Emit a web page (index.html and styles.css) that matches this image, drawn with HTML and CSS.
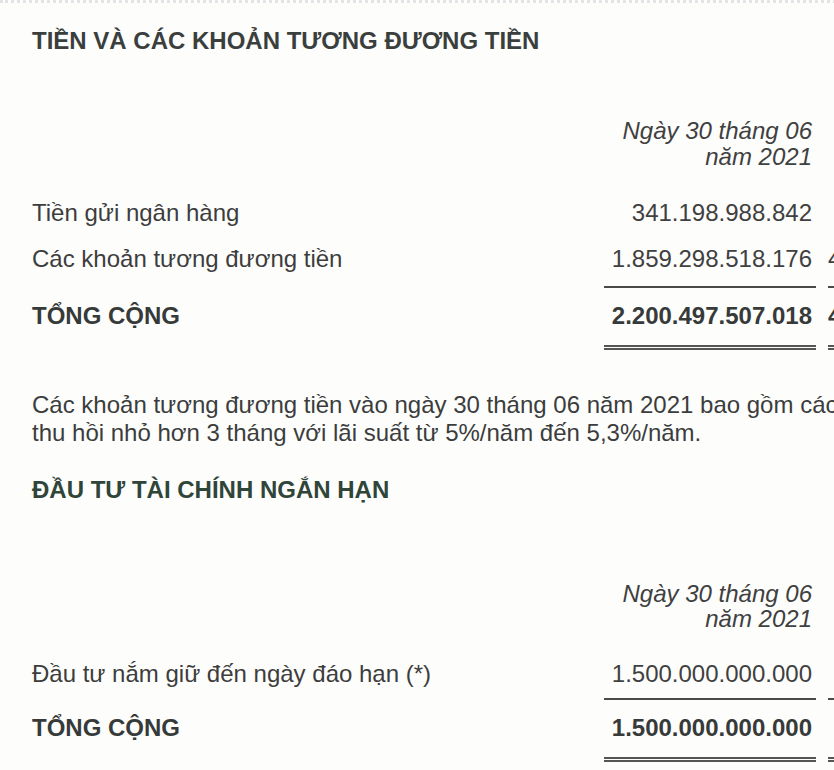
FILE: index.html
```html
<!DOCTYPE html>
<html lang="vi">
<head>
<meta charset="utf-8">
<title>Tiền và các khoản tương đương tiền</title>
<link rel="stylesheet" href="styles.css">
</head>
<body>
<main class="page">
  <section class="note note-cash">
    <h2 class="note-title">TIỀN VÀ CÁC KHOẢN TƯƠNG ĐƯƠNG TIỀN</h2>
    <div class="fin-table">
      <div class="row row-head">
        <span class="label"></span>
        <span class="amount date">Ngày 30 tháng 06<br>năm 2021</span>
        <span class="prev"></span>
      </div>
      <div class="row">
        <span class="label">Tiền gửi ngân hàng</span>
        <span class="amount">341.198.988.842</span>
        <span class="prev"></span>
      </div>
      <div class="row">
        <span class="label">Các khoản tương đương tiền</span>
        <span class="amount">1.859.298.518.176</span>
        <span class="prev">4</span>
      </div>
      <div class="row row-total">
        <span class="label">TỔNG CỘNG</span>
        <span class="amount">2.200.497.507.018</span>
        <span class="prev">4</span>
      </div>
    </div>
    <p class="note-text">Các khoản tương đương tiền vào ngày 30 tháng 06 năm 2021 bao gồm các<br>thu hồi nhỏ hơn 3 tháng với lãi suất từ 5%/năm đến 5,3%/năm.</p>
  </section>

  <section class="note note-invest">
    <h2 class="note-title note-title-green">ĐẦU TƯ TÀI CHÍNH NGẮN HẠN</h2>
    <div class="fin-table">
      <div class="row row-head">
        <span class="label"></span>
        <span class="amount date">Ngày 30 tháng 06<br>năm 2021</span>
        <span class="prev"></span>
      </div>
      <div class="row">
        <span class="label">Đầu tư nắm giữ đến ngày đáo hạn (*)</span>
        <span class="amount">1.500.000.000.000</span>
        <span class="prev"></span>
      </div>
      <div class="row row-total">
        <span class="label">TỔNG CỘNG</span>
        <span class="amount">1.500.000.000.000</span>
        <span class="prev"></span>
      </div>
    </div>
  </section>
</main>
</body>
</html>
```

FILE: styles.css
```css
html, body {
  margin: 0;
  padding: 0;
  background: #fdfdfc;
  overflow: hidden;
}

body {
  width: 834px;
  height: 770px;
  font-family: "Liberation Sans", Arial, sans-serif;
  color: #3d3d3d;
}

.page {
  border-top: 3px dotted #e2e4e6;
  width: 1100px;
}

.note-title {
  margin: 0;
  padding-left: 32px;
  font-family: "Liberation Sans", Arial, sans-serif;
  font-weight: bold;
  font-size: 24px;
  line-height: 28px;
  color: #3a3f3d;
}

.note-cash .note-title {
  margin-top: 24px;
}

.note-title-green {
  color: #2f4539;
  margin-top: 29px;
}

.fin-table {
  display: flex;
  flex-direction: column;
}

.row {
  display: grid;
  grid-template-columns: 560px 212px 200px;
  column-gap: 12px;
  padding-left: 32px;
  font-size: 24px;
  line-height: 46px;
}

.row-head {
  line-height: 26px;
  margin-top: 63px;
  margin-bottom: 20px;
}

.note-invest .row-head {
  margin-top: 77px;
  line-height: 25px;
}

.label {
  white-space: nowrap;
}

.amount {
  text-align: right;
  padding-right: 4px;
  white-space: nowrap;
  color: #3f4040;
}

.date {
  font-style: italic;
}

.prev {
  white-space: nowrap;
  color: #3f4040;
}

.row-total {
  font-weight: bold;
  line-height: 30px;
  color: #363a39;
}

.row-total > span {
  margin-top: 4px;
  padding-top: 13px;
  padding-bottom: 14px;
  border-top: 2px solid transparent;
  border-bottom: 5px double transparent;
}

.row-total .amount,
.row-total .prev {
  border-top-color: #4a4a4a;
  border-bottom-color: #555;
  color: #363a39;
}

.note-invest .row-total > span {
  margin-top: 1px;
}

.note-text {
  margin: 41px 0 0;
  padding-left: 32px;
  font-size: 24px;
  line-height: 28px;
  white-space: nowrap;
  color: #3b3d3d;
}
```
